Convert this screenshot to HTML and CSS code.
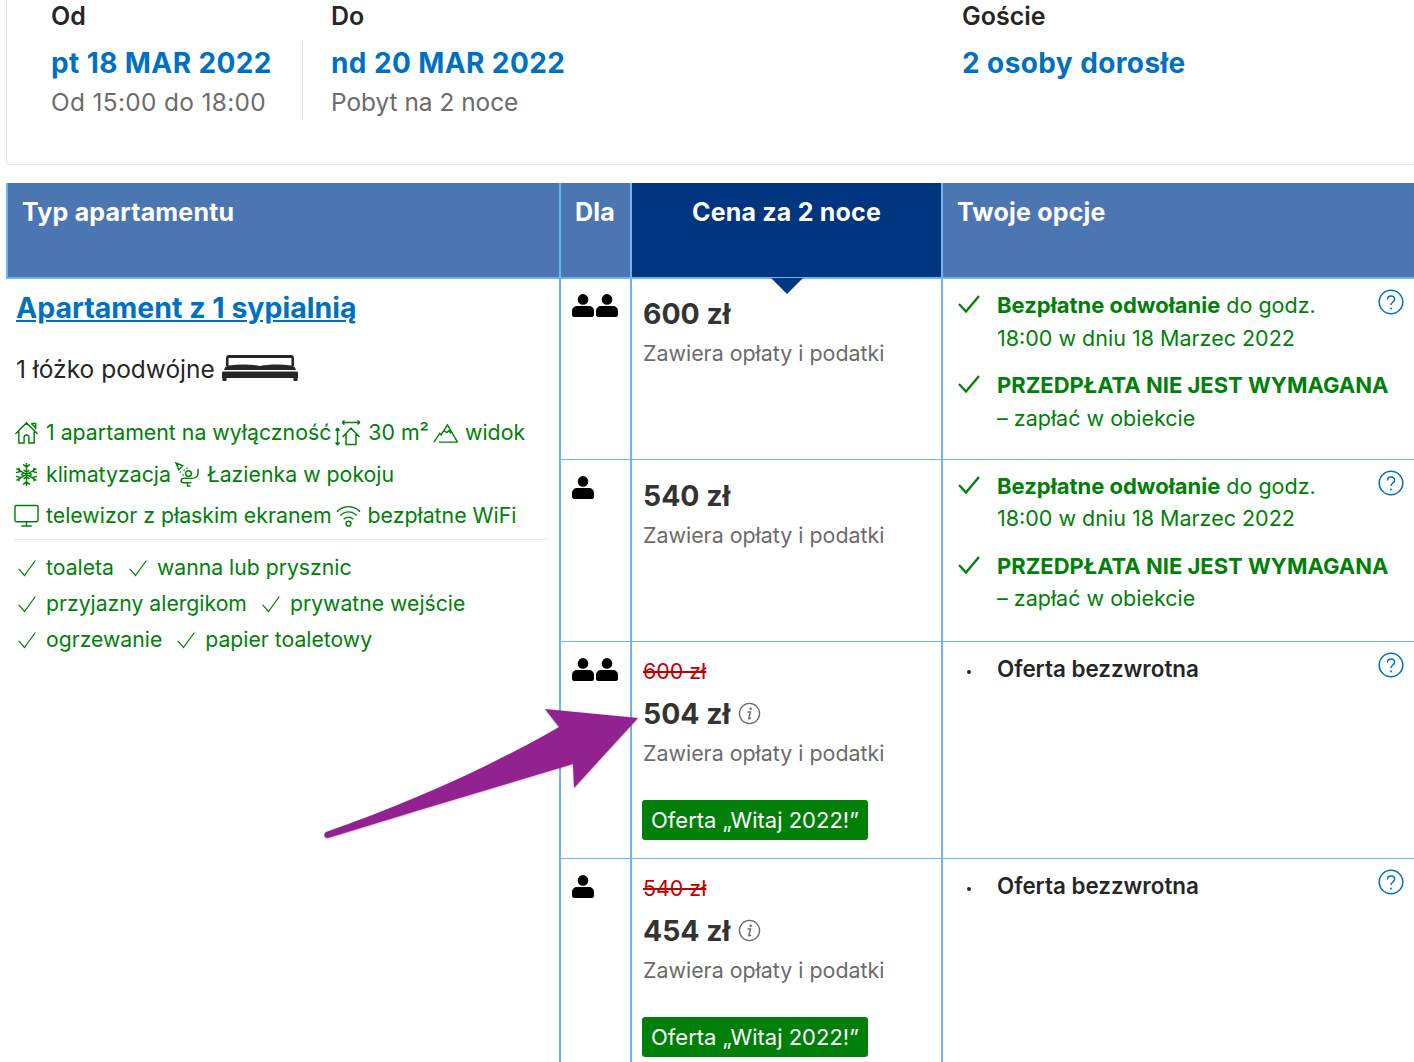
FILE: index.html
```html
<!DOCTYPE html>
<html lang="pl">

<head>
    <meta charset="utf-8">
    <meta name="viewport" content="width=device-width, initial-scale=1.0">
    <title>Apartament z 1 sypialnią</title>
    <link rel="stylesheet" href="styles.css">
</head>

<body>
    <svg class="defs" width="0" height="0">
        <symbol id="person" viewBox="0 0 22 24">
            <circle cx="11" cy="5.400" r="5.300" />
            <path d="M0 20.500v-3.500c0-3 2.500-5 5-5h12c2.500 0 5 2 5 5v3.500c0 1.500-.8 2.500-2 2.500H2c-1.200 0-2-1-2-2.500z" />
        </symbol>
        <symbol id="check" viewBox="0 0 24 24">
            <path d="M2 13l7 8L22 3" fill="none" stroke="currentColor" stroke-width="1.500" />
        </symbol>
        <symbol id="boldcheck" viewBox="0 0 24 20">
            <path d="M2 10l7 7.500L22 2" fill="none" stroke="currentColor" stroke-width="2.300" />
        </symbol>
        <symbol id="help" viewBox="0 0 26 26">
            <circle cx="13" cy="13" r="11.800" fill="none" stroke="#0071c2" stroke-width="1.500" />
            <path d="M9.500 10.500c0-2.200 1.600-3.500 3.600-3.500s3.500 1.300 3.500 3.200c0 2.800-3.600 2.800-3.600 5.800" fill="none" stroke="#0071c2" stroke-width="1.500" />
            <circle cx="13" cy="19.500" r="1" fill="#0071c2" />
        </symbol>
        <symbol id="info" viewBox="0 0 24 24">
            <circle cx="12" cy="12" r="10.500" fill="none" stroke="#6b6b6b" stroke-width="1.400" />
            <path d="M10 10.500h3l-1.700 6.500c-.2.800.6 1 2.200-.4" fill="none" stroke="#6b6b6b" stroke-width="1.500" />
            <circle cx="13.200" cy="7" r="1.300" fill="#6b6b6b" />
        </symbol>
    </svg>

    <div class="page">
        <section class="pobyt">
            <div class="pole pole-od">
                <h3>Od</h3>
                <p class="data">pt 18 MAR 2022</p>
                <p class="opis">Od 15:00 do 18:00</p>
            </div>
            <div class="pole pole-do">
                <h3>Do</h3>
                <p class="data">nd 20 MAR 2022</p>
                <p class="opis">Pobyt na 2 noce</p>
            </div>
            <div class="pole pole-goscie">
                <h3>Goście</h3>
                <p class="data">2 osoby dorosłe</p>
            </div>
        </section>

        <table class="oferty">
            <colgroup>
                <col class="k-typ">
                <col class="k-dla">
                <col class="k-cena">
                <col class="k-opcje">
            </colgroup>
            <thead>
                <tr>
                    <th>Typ apartamentu</th>
                    <th>Dla</th>
                    <th class="wybrana">Cena za 2 noce</th>
                    <th>Twoje opcje</th>
                </tr>
            </thead>
            <tbody>
                <tr class="rzad-a pierwszy">
                    <td class="typ" rowspan="4">
                        <a class="nazwa" href="#">Apartament z 1 sypialnią</a>
                        <p class="lozko">1 łóżko podwójne
                            <svg class="ikona-lozko" viewBox="0 0 78 28" width="78" height="28">
                                <path d="M5 12V4C5 2 6 1 8 1h62c2 0 3 1 3 3v8h-2.500V4H7.500v8z" />
                                <path d="M3 16c1-3 2-4 5-4.500 10-1.500 22-1.500 31 .5 9-2 21-2 31-.5 3 .5 4 1.500 5 4.500z" />
                                <path d="M1 19c0-1 .5-1.500 1.500-1.500h73c1 0 1.500.5 1.500 1.500v5H1z" />
                                <path d="M1.500 24h4v3h-4zM72.500 24h4v3h-4z" />
                            </svg>
                        </p>
                        <div class="cechy">
                            <ul class="wiersz">
                                <li>
                                    <svg class="ikona" viewBox="0 0 26 26">
                                        <path d="M1.500 14.500L13 3l11.500 11.500M18 3.500h4.500v6.500M18 3.500l4.500 4.500M5 12v12h5.500v-6a2.500 2.500 0 0 1 5 0v6H21V12" />
                                    </svg>
                                    1 apartament na wyłączność
                                </li>
                                <li>
                                    <svg class="ikona ikona-metraz" viewBox="0 0 26 26">
                                        <path d="M7 2.500h18M7 2.500l2.500-2M7 2.500l2.500 2M25 2.500l-2.500-2M25 2.500l-2.500 2M2.500 8v17M2.500 8L.5 10.500M2.500 8l2 2.500M2.500 25l-2-2.500M2.500 25l2-2.500M7.500 17L16 8l8.500 9M11 14v10.500h10V14" />
                                    </svg>
                                    30 m²
                                </li>
                                <li>
                                    <svg class="ikona" viewBox="0 0 26 26">
                                        <path d="M1 23L7 14l2 2M6 23h19.500L15 5 8 16M11.500 11l3 2 2-2 2 3" />
                                    </svg>
                                    widok
                                </li>
                            </ul>
                            <ul class="wiersz">
                                <li>
                                    <svg class="ikona" viewBox="0 0 26 26">
                                        <path d="M13 1v24M2.500 7l21 12M2.500 19l21-12M9.500 2.500l3.500 3 3.500-3M9.500 23.500l3.500-3 3.500 3M2 11l4-1-1-4M24 15l-4 1 1 4M2 15l4 1-1 4M24 11l-4-1 1-4M10 8.500l3 2 3-2M10 17.500l3-2 3 2M7.500 13l3-1.500M18.500 13l-3-1.500M7.500 13l3 1.500M18.500 13l-3 1.500" />
                                    </svg>
                                    klimatyzacja
                                </li>
                                <li>
                                    <svg class="ikona" viewBox="0 0 26 26">
                                        <path d="M1 1l7 3-4 4zM5 10l1 1M9 8l1 1M8 13l1 1M12 6l1 1" />
                                        <circle cx="14" cy="12" r="3" />
                                        <path d="M24 7v5c0 3-3 5-6 5H9c-3.500 0-3.500 4.500 0 4.500h4V25h3M11 17v-1M17 21.500h-3" />
                                    </svg>
                                    Łazienka w pokoju
                                </li>
                            </ul>
                            <ul class="wiersz">
                                <li>
                                    <svg class="ikona" viewBox="0 0 26 26">
                                        <rect x="1" y="2.500" width="24" height="17" rx="1.500" />
                                        <path d="M13 19.500V24M7.500 24h11" />
                                    </svg>
                                    telewizor z płaskim ekranem
                                </li>
                                <li>
                                    <svg class="ikona" viewBox="0 0 26 26">
                                        <path d="M1 9c7-7 17-7 24 0M4.500 13c5-5 12-5 17 0M8 17c3-3 7-3 10 0" />
                                        <circle cx="13" cy="21.500" r="2.500" />
                                    </svg>
                                    bezpłatne WiFi
                                </li>
                            </ul>
                        </div>
                        <div class="udogodnienia">
                            <ul class="wiersz">
                                <li><svg class="ptaszek"><use href="#check" /></svg>toaleta</li>
                                <li><svg class="ptaszek"><use href="#check" /></svg>wanna lub prysznic</li>
                            </ul>
                            <ul class="wiersz">
                                <li><svg class="ptaszek"><use href="#check" /></svg>przyjazny alergikom</li>
                                <li><svg class="ptaszek"><use href="#check" /></svg>prywatne wejście</li>
                            </ul>
                            <ul class="wiersz">
                                <li><svg class="ptaszek"><use href="#check" /></svg>ogrzewanie</li>
                                <li><svg class="ptaszek"><use href="#check" /></svg>papier toaletowy</li>
                            </ul>
                        </div>
                    </td>
                    <td class="dla"><svg class="osoba"><use href="#person" /></svg><svg class="osoba"><use href="#person" /></svg></td>
                    <td class="cena">
                        <p class="kwota">600 zł</p>
                        <p class="podatki">Zawiera opłaty i podatki</p>
                    </td>
                    <td class="opcje">
                        <svg class="pomoc"><use href="#help" /></svg>
                        <div class="opcja"><svg class="ptak"><use href="#boldcheck" /></svg>
                            <p><b>Bezpłatne odwołanie</b> do godz.<br>18:00 w dniu 18 Marzec 2022</p>
                        </div>
                        <div class="opcja"><svg class="ptak"><use href="#boldcheck" /></svg>
                            <p><b>PRZEDPŁATA NIE JEST WYMAGANA</b><br>– zapłać w obiekcie</p>
                        </div>
                    </td>
                </tr>
                <tr class="rzad-a">
                    <td class="dla"><svg class="osoba"><use href="#person" /></svg></td>
                    <td class="cena">
                        <p class="kwota">540 zł</p>
                        <p class="podatki">Zawiera opłaty i podatki</p>
                    </td>
                    <td class="opcje">
                        <svg class="pomoc"><use href="#help" /></svg>
                        <div class="opcja"><svg class="ptak"><use href="#boldcheck" /></svg>
                            <p><b>Bezpłatne odwołanie</b> do godz.<br>18:00 w dniu 18 Marzec 2022</p>
                        </div>
                        <div class="opcja"><svg class="ptak"><use href="#boldcheck" /></svg>
                            <p><b>PRZEDPŁATA NIE JEST WYMAGANA</b><br>– zapłać w obiekcie</p>
                        </div>
                    </td>
                </tr>
                <tr class="rzad-b">
                    <td class="dla"><svg class="osoba"><use href="#person" /></svg><svg class="osoba"><use href="#person" /></svg></td>
                    <td class="cena">
                        <p class="stara">600 zł</p>
                        <p class="kwota">504 zł <svg class="info"><use href="#info" /></svg></p>
                        <p class="podatki">Zawiera opłaty i podatki</p>
                        <span class="promocja">Oferta „Witaj 2022!”</span>
                    </td>
                    <td class="opcje">
                        <svg class="pomoc"><use href="#help" /></svg>
                        <p class="bezzwrotna">Oferta bezzwrotna</p>
                    </td>
                </tr>
                <tr class="rzad-b">
                    <td class="dla"><svg class="osoba"><use href="#person" /></svg></td>
                    <td class="cena">
                        <p class="stara">540 zł</p>
                        <p class="kwota">454 zł <svg class="info"><use href="#info" /></svg></p>
                        <p class="podatki">Zawiera opłaty i podatki</p>
                        <span class="promocja">Oferta „Witaj 2022!”</span>
                    </td>
                    <td class="opcje">
                        <svg class="pomoc"><use href="#help" /></svg>
                        <p class="bezzwrotna">Oferta bezzwrotna</p>
                    </td>
                </tr>
            </tbody>
        </table>

        <!-- strzalka nalozona na screenshot -->
        <svg class="strzalka" viewBox="0 0 330 150" width="330" height="150">
            <path d="M320 20L227 11 241 29C170 70 90 105 8 134c-3 2-2 6 2 6C90 115 175 90 255 66L256 90z" />
        </svg>
    </div>
</body>

</html>
```

FILE: styles.css
```css
html {
    font-family: Inter, "Liberation Sans", sans-serif;
}

body {
    margin: 0;
    background-color: white;
    color: #262626;
}

p {
    margin: 0;
}

ul {
    list-style: none;
    margin: 0;
    padding: 0;
}

.defs {
    position: absolute;
}

.page {
    position: relative;
    height: 1062px;
    width: 1414px;
    overflow: hidden;
}

/* daty */
.pobyt {
    display: flex;
    box-sizing: border-box;
    width: 1440px;
    height: 165px;
    margin-left: 6px;
    border: 1px solid #e4e4e4;
    border-top: 0;
    border-radius: 0 0 4px 4px;
}

.pole h3 {
    margin: 0;
    font-size: 25px;
    line-height: 33px;
    font-weight: 600;
}

.pole-od {
    width: 296px;
    padding-left: 44px;
    box-sizing: border-box;
    position: relative;
}

.pole-od::after {
    content: "";
    position: absolute;
    right: 0;
    top: 41px;
    height: 79px;
    width: 1px;
    background-color: #dedede;
}

.pole-do {
    width: 659px;
    padding-left: 28px;
    box-sizing: border-box;
    flex: none;
}

.data {
    margin-top: 13px;
    font-size: 28px;
    letter-spacing: 0.4px;
    line-height: 34px;
    font-weight: 700;
    color: #0071c2;
}

.opis {
    margin-top: 5px;
    font-size: 24.400px;
    line-height: 34px;
    color: #6b6b6b;
}

.pole-od .opis {
    letter-spacing: 0.350px;
}

/* tabela */
.oferty {
    table-layout: fixed;
    border-collapse: collapse;
    width: 1440px;
    margin: 18px 0 0 6px;
}

.k-typ {
    width: 553px;
}

.k-dla {
    width: 71px;
}

.k-cena {
    width: 311px;
}

.oferty th {
    position: relative;
    height: 95px;
    padding: 12px 14px 0;
    box-sizing: border-box;
    vertical-align: top;
    text-align: left;
    font-size: 25px;
    letter-spacing: 0.200px;
    line-height: 34px;
    font-weight: 700;
    color: white;
    background-color: #4c76b2;
    border: 2px solid #6cb4f5;
    border-top: 0;
}

.oferty th.wybrana {
    background-color: #003580;
    text-align: center;
}

.wybrana::after {
    content: "";
    position: absolute;
    left: 50%;
    bottom: -17px;
    margin-left: -16px;
    border: 16px solid transparent;
    border-top-color: #003580;
    border-bottom: 0;
}

.oferty td {
    vertical-align: top;
    border: 2px solid #6cb4f5;
    border-top-width: 1px;
    border-bottom-width: 1px;
    box-sizing: border-box;
}

.oferty td.typ {
    border-left: 0;
    border-bottom: 0;
    padding: 9px 11px 0 9px;
}

.rzad-a td {
    height: 182px;
}

.pierwszy td {
    height: 181px;
}

.rzad-b td {
    height: 217px;
}

.nazwa {
    font-size: 28.500px;
    line-height: 40px;
    font-weight: 700;
    color: #0071c2;
}

.lozko {
    display: flex;
    align-items: center;
    gap: 6px;
    margin-top: 21px;
    font-size: 24.500px;
    line-height: 40px;
}

.ikona-lozko {
    flex: none;
    margin-top: -3px;
    fill: #262626;
}

.wiersz {
    display: flex;
}

.cechy {
    margin: 23px 0 0 -2px;
    padding-bottom: 2px;
    border-bottom: 1px solid #e6e6e6;
    font-size: 21.300px;
    line-height: 41.500px;
    color: #008009;
}

.cechy .wiersz {
    column-gap: 4px;
}

.cechy li {
    display: flex;
    align-items: center;
    gap: 7px;
    white-space: nowrap;
}

.ikona {
    flex: none;
    width: 25px;
    height: 25px;
    fill: none;
    stroke: #008009;
    stroke-width: 1.500;
}

.ikona-metraz {
    width: 26px;
    height: 26px;
}

.udogodnienia {
    margin-top: 9px;
    font-size: 21.200px;
    line-height: 36px;
    color: #008009;
}

.udogodnienia .wiersz {
    column-gap: 13px;
}

.udogodnienia li {
    display: flex;
    align-items: center;
    white-space: nowrap;
}

.ptaszek {
    flex: none;
    width: 20px;
    height: 20px;
    margin: 2px 9px 0 1px;
    color: #008009;
}

.osoba {
    width: 22px;
    height: 24px;
    margin-right: 2px;
    fill: black;
}

.oferty td.dla {
    padding: 16px 0 0 11px;
}

.oferty .pierwszy td.dla {
    padding-top: 15px;
}

.oferty td.cena {
    padding: 18px 11px 0;
}

.oferty .pierwszy td.cena {
    padding-top: 17px;
}

.oferty .rzad-b td.cena {
    padding-top: 14px;
}

.kwota {
    display: flex;
    align-items: center;
    gap: 8px;
    font-size: 28.400px;
    line-height: 36px;
    font-weight: 700;
    color: #333333;
}

.podatki {
    margin-top: 6px;
    font-size: 21.400px;
    line-height: 30px;
    color: #6b6b6b;
}

.stara {
    font-size: 21.400px;
    line-height: 30px;
    color: #c00000;
    text-decoration: line-through;
    margin-bottom: 10px;
}

.info {
    width: 23px;
    height: 23px;
}

.promocja {
    display: block;
    width: fit-content;
    margin: 32px 0 0 -1px;
    padding: 0 9px;
    font-size: 22px;
    line-height: 40px;
    color: white;
    background-color: #008009;
    border-radius: 3px;
}

.oferty td.opcje {
    position: relative;
    padding: 10px 14px 0 14px;
    font-size: 21.500px;
    line-height: 32.500px;
    color: #008009;
}

.pomoc {
    position: absolute;
    left: 435px;
    top: 10px;
    width: 26px;
    height: 26px;
}

.opcja {
    display: flex;
    gap: 16px;
    margin-bottom: 15px;
}

.opcja b {
    font-size: 22px;
    font-weight: 700;
}

.ptak {
    flex: none;
    width: 24px;
    height: 20px;
    margin-top: 5px;
}

.bezzwrotna {
    position: relative;
    margin-top: 1px;
    padding-left: 40px;
    font-size: 22.400px;
    font-weight: 600;
    color: #262626;
}

.bezzwrotna::before {
    content: "";
    position: absolute;
    left: 10px;
    top: 17px;
    width: 4px;
    height: 4px;
    border-radius: 50%;
    background-color: #262626;
}

.strzalka {
    position: absolute;
    left: 318px;
    top: 698px;
    filter: drop-shadow(0 1px 1px rgba(0, 0, 0, 0.25));
}

.strzalka path {
    fill: #92228f;
}
```
